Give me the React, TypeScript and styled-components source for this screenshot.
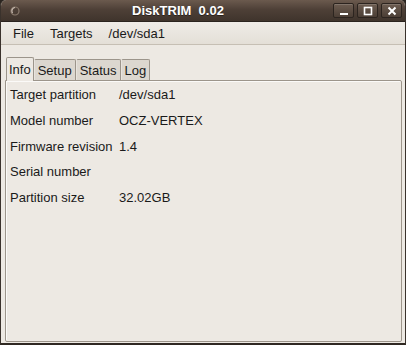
import styled, { createGlobalStyle } from "styled-components";

const GlobalStyle = createGlobalStyle`
  html, body {
    margin: 0;
    padding: 0;
    background: #2b2520;
  }
  body {
    font-family: "Liberation Sans", Arial, sans-serif;
    font-size: 13px;
    color: #1a1a1a;
  }
`;

const rows = [
  { label: "Target partition", value: "/dev/sda1" },
  { label: "Model number", value: "OCZ-VERTEX" },
  { label: "Firmware revision", value: "1.4" },
  { label: "Serial number", value: "" },
  { label: "Partition size", value: "32.02GB" },
];

const tabs = ["Info", "Setup", "Status", "Log"];

const App = () => {
  return (
    <>
      <GlobalStyle />
      <Window>
        <TitleBar>
          <WindowMenu>
            <svg width="12" height="12" viewBox="0 0 12 12">
              <circle cx="6" cy="6" r="4" fill="none" stroke="#8a7a6d" strokeWidth="1.2" />
              <path d="M3.5 8 A3.5 3.5 0 0 1 6 2.5" fill="none" stroke="#cfc3b8" strokeWidth="1.2" />
            </svg>
          </WindowMenu>
          <Title>DiskTRIM&nbsp;&nbsp;0.02</Title>
          <Controls>
            <ControlButton>
              <svg width="10" height="10" viewBox="0 0 10 10">
                <rect x="1" y="7" width="8" height="2" fill="#fff" />
              </svg>
            </ControlButton>
            <ControlButton>
              <svg width="10" height="10" viewBox="0 0 10 10">
                <rect x="1.5" y="1.5" width="7" height="7" fill="none" stroke="#fff" strokeWidth="1.6" />
              </svg>
            </ControlButton>
            <ControlButton>
              <svg width="10" height="10" viewBox="0 0 10 10">
                <path d="M1.5 1.5 L8.5 8.5 M8.5 1.5 L1.5 8.5" stroke="#fff" strokeWidth="2" />
              </svg>
            </ControlButton>
          </Controls>
        </TitleBar>
        <MenuBar>
          <MenuItem>File</MenuItem>
          <MenuItem>Targets</MenuItem>
          <MenuItem>/dev/sda1</MenuItem>
        </MenuBar>
        <Body>
          <TabStrip>
            {tabs.map((t, i) => (
              <Tab key={t} $active={i === 0}>{t}</Tab>
            ))}
          </TabStrip>
          <Panel>
            {rows.map((r) => (
              <Row key={r.label}>
                <Label>{r.label}</Label>
                <Value>{r.value}</Value>
              </Row>
            ))}
          </Panel>
        </Body>
      </Window>
    </>
  );
};

export default App;

const Window = styled.div`
  width: 406px;
  height: 345px;
  display: flex;
  flex-direction: column;
  background: #ede9e3;
  border-left: 1px solid #3a322c;
  border-right: 1px solid #3a322c;
  border-bottom: 2px solid #2f2822;
  border-radius: 6px 6px 0 0;
  box-sizing: border-box;
  overflow: hidden;
`;

const TitleBar = styled.div`
  height: 21px;
  flex: none;
  display: flex;
  align-items: center;
  padding: 0 3px 0 6px;
  background: linear-gradient(#6b5a4e, #4e4037 45%, #3f342c);
  border-bottom: 1px solid #2a231e;
`;

const WindowMenu = styled.div`
  width: 16px;
  display: flex;
  align-items: center;
  justify-content: center;
`;

const Title = styled.div`
  flex: 1;
  text-align: center;
  color: #fff;
  font-weight: bold;
  font-size: 13px;
  text-shadow: 0 1px 0 #2a221c;
`;

const Controls = styled.div`
  display: flex;
  gap: 3px;
`;

const ControlButton = styled.div`
  width: 19px;
  height: 13px;
  display: flex;
  align-items: center;
  justify-content: center;
  border: 1px solid #2c241f;
  border-radius: 2px;
  background: linear-gradient(#6d5d51, #4b3e35);
  box-shadow: inset 0 1px 0 rgba(255, 255, 255, 0.15);
`;

const MenuBar = styled.div`
  height: 22px;
  flex: none;
  display: flex;
  align-items: center;
  padding: 0 4px;
  background: linear-gradient(#efece7, #e4dfd7);
  border-bottom: 1px solid #c6bfb4;
`;

const MenuItem = styled.div`
  padding: 0 8px;
  font-size: 13px;
  color: #1a1a1a;
`;

const Body = styled.div`
  flex: 1;
  display: flex;
  flex-direction: column;
  padding: 11px 3px 1px 4px;
`;

const TabStrip = styled.div`
  display: flex;
  align-items: flex-end;
  height: 24px;
  padding-left: 1px;
`;

const Tab = styled.div<{ $active?: boolean }>`
  height: ${(p) => (p.$active ? 24 : 21)}px;
  display: flex;
  align-items: center;
  padding: 0 ${(p) => (p.$active ? 2 : 3)}px;
  font-size: 13px;
  box-sizing: border-box;
  border: 1px solid #9c958b;
  border-bottom: none;
  border-left-color: ${(p) => (p.$active ? "#9c958b" : "#e8e4de")};
  border-radius: 2px 2px 0 0;
  background: ${(p) => (p.$active ? "#ede9e3" : "#dcd7cf")};
  margin-bottom: ${(p) => (p.$active ? -1 : 0)}px;
  position: relative;
  z-index: ${(p) => (p.$active ? 1 : 0)};
`;

const Panel = styled.div`
  flex: 1;
  display: flex;
  flex-direction: column;
  padding: 1px 4px;
  border: 1px solid #9c958b;
  border-radius: 0 2px 2px 2px;
  background: #ede9e3;
  box-shadow: inset 1px 1px 0 #fbfaf8;
`;

const Row = styled.div`
  display: grid;
  grid-template-columns: 109px 1fr;
  height: 25.7px;
  align-items: center;
`;

const Label = styled.div`
  font-size: 13px;
  white-space: nowrap;
`;

const Value = styled.div`
  font-size: 13px;
`;
